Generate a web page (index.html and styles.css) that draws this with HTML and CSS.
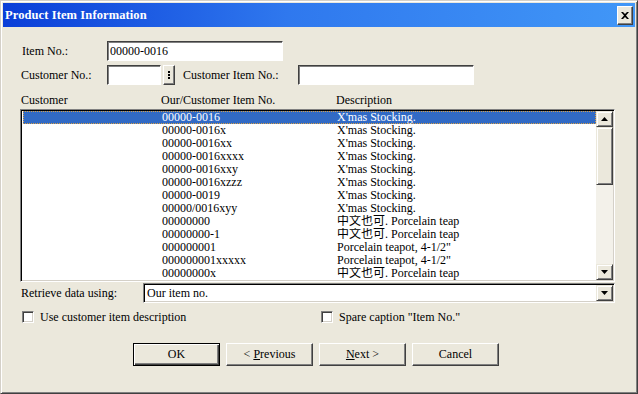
FILE: index.html
```html
<!DOCTYPE html>
<html lang="en">
<head>
    <meta charset="UTF-8">
    <title>Product Item Information</title>
    <link rel="stylesheet" href="styles.css">
</head>
<body>

<div class="window">
    <div class="titlebar">
        <span class="title">Product Item Information</span>
        <div class="close-btn">
            <svg width="8" height="7" viewBox="0 0 8 7"><path d="M0 0h2l2 2 2-2h2L5 3.5 8 7H6L4 5 2 7H0l3-3.5z" fill="#000"/></svg>
        </div>
    </div>

    <div class="content">
        <div class="field-row">
            <label class="label">Item No.:</label>
            <div class="input wide">00000-0016</div>
        </div>
        <div class="field-row second">
            <label class="label">Customer No.:</label>
            <div class="input narrow"></div>
            <!-- кнопка выбора клиента -->
            <div class="lookup-btn">
                <svg width="4" height="10" viewBox="0 0 4 10"><rect x="1" y="1" width="2" height="2" fill="#000"/><rect x="1" y="4" width="2" height="2" fill="#000"/><rect x="1" y="7" width="2" height="2" fill="#000"/></svg>
            </div>
            <label class="label cust-item">Customer Item No.:</label>
            <div class="input wide"></div>
        </div>

        <div class="list-header">
            <span>Customer</span>
            <span>Our/Customer Item No.</span>
            <span>Description</span>
        </div>

        <div class="listbox">
            <div class="rows">
                <div class="row selected"><span></span><span>00000-0016</span><span>X'mas Stocking.</span></div>
                <div class="row"><span></span><span>00000-0016x</span><span>X'mas Stocking.</span></div>
                <div class="row"><span></span><span>00000-0016xx</span><span>X'mas Stocking.</span></div>
                <div class="row"><span></span><span>00000-0016xxxx</span><span>X'mas Stocking.</span></div>
                <div class="row"><span></span><span>00000-0016xxy</span><span>X'mas Stocking.</span></div>
                <div class="row"><span></span><span>00000-0016xzzz</span><span>X'mas Stocking.</span></div>
                <div class="row"><span></span><span>00000-0019</span><span>X'mas Stocking.</span></div>
                <div class="row"><span></span><span>00000/0016xyy</span><span>X'mas Stocking.</span></div>
                <div class="row"><span></span><span>00000000</span><span>中文也可. Porcelain teap</span></div>
                <div class="row"><span></span><span>00000000-1</span><span>中文也可. Porcelain teap</span></div>
                <div class="row"><span></span><span>000000001</span><span>Porcelain teapot, 4-1/2"</span></div>
                <div class="row"><span></span><span>000000001xxxxx</span><span>Porcelain teapot, 4-1/2"</span></div>
                <div class="row"><span></span><span>00000000x</span><span>中文也可. Porcelain teap</span></div>
            </div>
            <div class="scrollbar">
                <div class="sb-btn">
                    <svg width="7" height="4" viewBox="0 0 7 4"><path d="M3.5 0L7 4H0z" fill="#000"/></svg>
                </div>
                <div class="sb-thumb"></div>
                <div class="sb-track"></div>
                <div class="sb-btn">
                    <svg width="7" height="4" viewBox="0 0 7 4"><path d="M0 0h7L3.5 4z" fill="#000"/></svg>
                </div>
            </div>
        </div>

        <div class="field-row retrieve">
            <label class="label retrieve-label">Retrieve data using:</label>
            <div class="combo">
                <span class="combo-text">Our item no.</span>
                <div class="sb-btn">
                    <svg width="7" height="4" viewBox="0 0 7 4"><path d="M0 0h7L3.5 4z" fill="#000"/></svg>
                </div>
            </div>
        </div>

        <div class="check-row">
            <div class="check-item first">
                <div class="checkbox"></div>
                <span>Use customer item description</span>
            </div>
            <div class="check-item">
                <div class="checkbox"></div>
                <span>Spare caption "Item No."</span>
            </div>
        </div>

        <div class="btn-row">
            <div class="btn default"><span>OK</span></div>
            <div class="btn"><span>&lt; <u>P</u>revious</span></div>
            <div class="btn"><span><u>N</u>ext &gt;</span></div>
            <div class="btn"><span>Cancel</span></div>
        </div>
    </div>
</div>

</body>
</html>
```

FILE: styles.css
```css
body {
    margin: 0;
    padding: 0;
    font-family: "Liberation Serif", "Noto Sans CJK TC", serif;
    font-size: 12px;
    color: #000;
    background: #ebe8dc;
}

.window {
    width: 638px;
    height: 394px;
    box-sizing: border-box;
    padding: 2px;
    border: 1px solid;
    border-color: #d4d0c8 #404040 #404040 #d4d0c8;
    box-shadow: inset 1px 1px #fff, inset -1px -1px #808080;
    background: #ebe8dc;
    overflow: hidden;
}

/* Заголовок окна */
.titlebar {
    height: 24px;
    display: flex;
    align-items: center;
    justify-content: space-between;
    padding: 0 2px 0 2px;
    background: linear-gradient(to right, #0a3ed8, #2f78ee 45%, #4197f7);
}

.title {
    color: #fff;
    font-weight: bold;
    font-size: 12.5px;
    letter-spacing: 0.1px;
}

.close-btn {
    width: 16px;
    height: 19px;
    box-sizing: border-box;
    display: flex;
    align-items: center;
    justify-content: center;
    background: #ebe8dc;
    border: 1px solid;
    border-color: #fff #404040 #404040 #fff;
    box-shadow: inset -1px -1px #808080;
}

.content {
    padding: 14px 20px 0 17px;
}

.field-row {
    display: flex;
    align-items: center;
    height: 20px;
}

.field-row.second {
    margin-top: 4px;
}

.label {
    width: 87px;
    padding-left: 1px;
    box-sizing: border-box;
    flex-shrink: 0;
    white-space: nowrap;
}

.field-row:first-child .label {
    padding-left: 2px;
}

.input {
    height: 20px;
    box-sizing: border-box;
    background: #fff;
    border: 1px solid;
    border-color: #404040 #fff #fff #404040;
    box-shadow: inset 1px 1px #808080;
    padding: 1px 0 0 2px;
    font-size: 12px;
    line-height: 16px;
}

.input.wide {
    width: 176px;
}

.input.narrow {
    width: 54px;
}

.lookup-btn {
    width: 12px;
    height: 20px;
    margin-left: 2px;
    box-sizing: border-box;
    display: flex;
    align-items: center;
    justify-content: center;
    background: #ebe8dc;
    border: 1px solid;
    border-color: #fff #404040 #404040 #fff;
    box-shadow: inset -1px -1px #808080;
}

.cust-item {
    width: 115px;
    margin-left: 8px;
    padding-left: 0;
}

/* Заголовки колонок */
.list-header {
    display: grid;
    grid-template-columns: 140px 175px 1fr;
    padding-left: 1px;
    margin-top: 8px;
    height: 16px;
    line-height: 14px;
}

.listbox {
    height: 173px;
    box-sizing: border-box;
    display: flex;
    border: 1px solid;
    border-color: #808080 #fff #fff #808080;
    box-shadow: inset 1px 1px #000, inset -1px -1px #d4d0c8;
    padding: 1px;
    background: #fff;
}

.rows {
    flex: 1;
    padding-left: 1px;
}

.row {
    display: grid;
    grid-template-columns: 139px 175px 1fr;
    height: 13px;
    line-height: 13px;
    white-space: nowrap;
    overflow: hidden;
}

.row.selected {
    background: #316ac5;
    color: #fff;
    outline: 1px dotted #d8a048;
    outline-offset: -1px;
}

.scrollbar {
    width: 17px;
    display: flex;
    flex-direction: column;
}

.sb-btn {
    width: 17px;
    height: 16px;
    box-sizing: border-box;
    flex-shrink: 0;
    display: flex;
    align-items: center;
    justify-content: center;
    background: #ebe8dc;
    border: 1px solid;
    border-color: #ebe8dc #404040 #404040 #ebe8dc;
    box-shadow: inset 1px 1px #fff, inset -1px -1px #808080;
}

.sb-thumb {
    height: 58px;
    box-sizing: border-box;
    background: #ebe8dc;
    border: 1px solid;
    border-color: #ebe8dc #404040 #404040 #ebe8dc;
    box-shadow: inset 1px 1px #fff, inset -1px -1px #808080;
}

.sb-track {
    flex: 1;
    background: #f3f1ea;
}

/* Нижняя часть */
.field-row.retrieve {
    margin-top: 1px;
}

.retrieve-label {
    width: 123px;
}

.combo {
    flex: 1;
    height: 20px;
    box-sizing: border-box;
    display: flex;
    align-items: center;
    justify-content: space-between;
    background: #fff;
    border: 1px solid;
    border-color: #808080 #fff #fff #808080;
    box-shadow: inset 1px 1px #000, inset -1px -1px #d4d0c8;
    padding: 1px;
}

.combo-text {
    padding-left: 2px;
}

.combo .sb-btn {
    height: 16px;
}

.check-row {
    display: flex;
    align-items: center;
    margin-top: 7px;
    height: 14px;
    padding-left: 2px;
}

.check-item {
    display: flex;
    align-items: center;
    gap: 6px;
}

.check-item.first {
    width: 299px;
}

.checkbox {
    width: 12px;
    height: 12px;
    box-sizing: border-box;
    background: #fff;
    border: 1px solid;
    border-color: #808080 #fff #fff #808080;
    box-shadow: inset 1px 1px #404040, inset -1px -1px #d4d0c8;
}

.btn-row {
    display: flex;
    gap: 6px;
    margin-top: 19px;
    padding-left: 113px;
}

.btn {
    width: 87px;
    height: 23px;
    box-sizing: border-box;
    display: flex;
    align-items: center;
    justify-content: center;
    background: #ebe8dc;
    border: 1px solid;
    border-color: #fff #404040 #404040 #fff;
    box-shadow: inset -1px -1px #808080;
}

.btn.default {
    border: 1px solid #000;
    box-shadow: inset 1px 1px #fff, inset -1px -1px #404040, inset -2px -2px #808080;
}
```
